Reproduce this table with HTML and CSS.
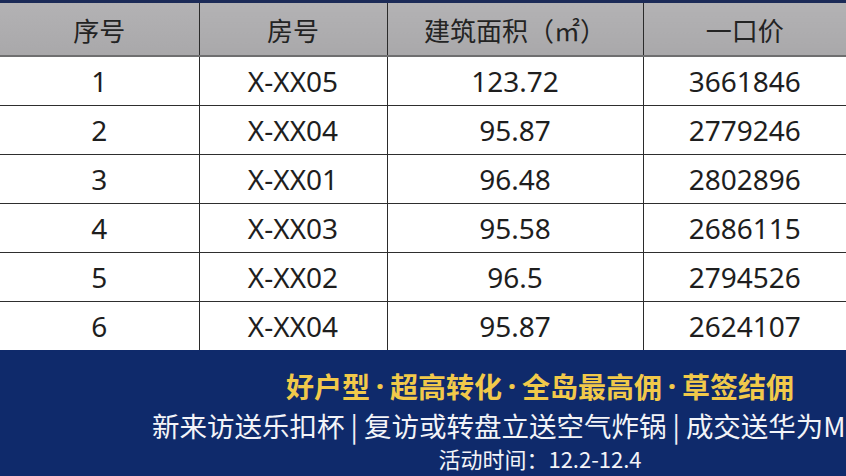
FILE: index.html
```html
<!DOCTYPE html>
<html lang="zh-CN">
<head>
<meta charset="utf-8">
<title>房源价格表</title>
<link rel="stylesheet" href="styles.css">
</head>
<body>
<div class="page">
  <div class="topbar"></div>
  <table class="price-table">
    <colgroup>
      <col class="c1"><col class="c2"><col class="c3"><col class="c4">
    </colgroup>
    <thead>
      <tr><th>序号</th><th>房号</th><th>建筑面积（㎡）</th><th>一口价</th></tr>
    </thead>
    <tbody>
      <tr><td>1</td><td>X-XX05</td><td>123.72</td><td>3661846</td></tr>
      <tr><td>2</td><td>X-XX04</td><td>95.87</td><td>2779246</td></tr>
      <tr><td>3</td><td>X-XX01</td><td>96.48</td><td>2802896</td></tr>
      <tr><td>4</td><td>X-XX03</td><td>95.58</td><td>2686115</td></tr>
      <tr><td>5</td><td>X-XX02</td><td>96.5</td><td>2794526</td></tr>
      <tr><td>6</td><td>X-XX04</td><td>95.87</td><td>2624107</td></tr>
    </tbody>
  </table>
  <div class="footer">
    <div class="line slogan">好户型<span class="dot">·</span>超高转化<span class="dot">·</span>全岛最高佣<span class="dot">·</span>草签结佣</div>
    <div class="gifts">新来访送乐扣杯<span class="sep">|</span>复访或转盘立送空气炸锅<span class="sep">|</span>成交送华为M</div>
    <div class="line period">活动时间：12.2-12.4</div>
  </div>
</div>
</body>
</html>
```

FILE: styles.css
```css
html, body {
  margin: 0;
  padding: 0;
  background: #ffffff;
}
body {
  font-family: "Noto Sans", "Noto Sans CJK SC", sans-serif;
  color: #1f1f1f;
}
.page {
  width: 846px;
  height: 476px;
  overflow: hidden;
  display: flex;
  flex-direction: column;
}
.topbar {
  height: 3px;
  background: #1b2a57;
}
.price-table {
  width: 846px;
  border-collapse: collapse;
  table-layout: fixed;
}
.c1 { width: 199px; }
.c2 { width: 188px; }
.c3 { width: 256px; }
.c4 { width: 203px; }
.price-table th,
.price-table td {
  padding: 0;
  text-align: center;
  vertical-align: middle;
  border-left: 1px solid #2b2b2b;
  border-right: 1px solid #2b2b2b;
}
.price-table th:first-child,
.price-table td:first-child { border-left: none; }
.price-table th:last-child,
.price-table td:last-child { border-right: none; }
.price-table th {
  height: 52px;
  background: linear-gradient(#b3b2b4, #a9a8aa);
  border-bottom: 2px solid #6f6f70;
  font-weight: 400;
  font-size: 26px;
  color: #232323;
  font-family: "Noto Sans CJK SC", sans-serif;
}
.price-table td {
  height: 48px;
  border-bottom: 1px solid #2e2e2e;
  font-size: 28px;
  color: #1e1e1e;
}
.price-table tbody tr:last-child td { border-bottom: none; }
.footer {
  flex: 1;
  background: #0f2a6b;
  display: flex;
  flex-direction: column;
  padding-top: 18px;
}
.line {
  padding-left: 234px;
  white-space: nowrap;
  display: flex;
  justify-content: center;
  font-family: "Noto Sans CJK SC", sans-serif;
}
.slogan {
  color: #f1c94a;
  font-size: 28px;
  font-weight: 700;
  line-height: 36px;
}
.dot {
  font-family: "Noto Sans", sans-serif;
  font-weight: 800;
  padding: 0 6px;
}
.gifts {
  padding-left: 152px;
  white-space: nowrap;
  font-family: "Noto Sans CJK SC", sans-serif;
  color: #f3f4f8;
  font-size: 27.5px;
  line-height: 38px;
  margin-top: 2px;
}
.sep {
  margin: 0 6px;
}
.period {
  color: #f3f4f8;
  font-size: 22px;
  line-height: 30px;
  margin-top: -1px;
}
```
